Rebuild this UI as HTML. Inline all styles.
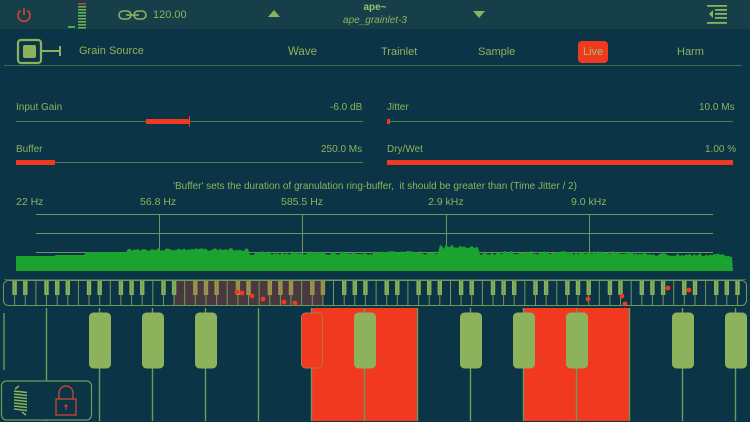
<!DOCTYPE html>
<html><head><meta charset="utf-8"><style>
*{margin:0;padding:0;box-sizing:border-box}
body{width:750px;height:422px;overflow:hidden;background:#0b3446;font-family:"Liberation Sans",sans-serif;color:#8cb35c;position:relative}
.a{position:absolute;white-space:nowrap}
.top{position:absolute;left:0;top:0;width:750px;height:29px;background:#163f49}
.lab{font-size:10px}
.tab{font-size:11px}
.ln{position:absolute;height:1px;background:#4f7a55}
.red{position:absolute;background:#f0391e}
</style></head><body>
<div class="top"></div>
<svg class="a" style="left:15px;top:6px" width="18" height="18" viewBox="0 0 18 18"><path d="M5.5 4.5A6 6 0 1 0 12.5 4.5" fill="none" stroke="#d9442c" stroke-width="1.6"/><line x1="9" y1="2" x2="9" y2="9" stroke="#d9442c" stroke-width="1.6"/></svg>
<svg class="a" style="left:66px;top:1px" width="22" height="28"><rect x="2" y="25" width="7" height="2" fill="#3fb53a"/><g fill="#6ab04a"><rect x="12" y="2" width="8" height="1.6" fill="#b84a3a"/><rect x="12" y="5" width="8" height="1.6"/><rect x="12" y="8" width="8" height="1.6"/><rect x="12" y="11" width="8" height="1.6"/><rect x="12" y="14" width="8" height="1.6"/><rect x="12" y="17" width="8" height="1.6"/><rect x="12" y="20" width="8" height="1.6"/><rect x="12" y="23" width="8" height="1.6"/><rect x="12" y="26" width="8" height="1.6"/></g></svg>
<svg class="a" style="left:118px;top:9px" width="30" height="12"><rect x="1" y="2" width="12" height="8" rx="4" fill="none" stroke="#8cb35c" stroke-width="1.6"/><rect x="16" y="2" width="12" height="8" rx="4" fill="none" stroke="#8cb35c" stroke-width="1.6"/><line x1="8" y1="6" x2="21" y2="6" stroke="#8cb35c" stroke-width="1.6"/></svg>
<div class="a" style="left:153px;top:9px;font-size:11px">120.00</div>
<svg class="a" style="left:268px;top:10px" width="12" height="8"><path d="M0 7L6 0L12 7Z" fill="#8cb35c"/></svg>
<svg class="a" style="left:473px;top:11px" width="12" height="8"><path d="M0 0L6 7L12 0Z" fill="#8cb35c"/></svg>
<div class="a" style="left:300px;top:2px;width:150px;text-align:center;font-size:10px;font-weight:bold;color:#9cc46a">ape~</div>
<div class="a" style="left:300px;top:15px;width:150px;text-align:center;font-size:10px;font-style:italic">ape_grainlet-3</div>
<svg class="a" style="left:707px;top:5px" width="22" height="21" fill="#8cb35c"><rect x="0" y="0" width="20" height="1.8"/><rect x="8" y="4" width="12" height="1.8"/><rect x="8" y="8" width="12" height="1.8"/><rect x="8" y="12" width="12" height="1.8"/><rect x="0" y="17" width="20" height="1.8"/><path d="M6 5L2 9L6 13Z"/></svg>
<svg class="a" style="left:16px;top:38px" width="50" height="28"><rect x="2" y="2" width="23" height="23" rx="3" fill="none" stroke="#8cb35c" stroke-width="2.2"/><rect x="7" y="7" width="13" height="13" rx="2" fill="#8cb35c"/><line x1="26" y1="13" x2="44" y2="13" stroke="#8cb35c" stroke-width="2"/><line x1="44" y1="8" x2="44" y2="18" stroke="#8cb35c" stroke-width="2"/></svg>
<div class="a tab" style="left:79px;top:45px">Grain Source</div>
<div class="a tab" style="left:288px;top:46px;font-size:11.5px">Wave</div>
<div class="a tab" style="left:381px;top:46px">Trainlet</div>
<div class="a tab" style="left:478px;top:46px">Sample</div>
<div class="a" style="left:578px;top:41px;width:30px;height:22px;background:#f0391e;border-radius:4px"></div>
<div class="a tab" style="left:583px;top:46px;color:#9cc46a">Live</div>
<div class="a tab" style="left:677px;top:46px">Harm</div>
<div class="ln" style="left:4px;top:65px;width:738px;background:#3f6a55"></div>
<div class="a lab" style="left:16px;top:102px">Input Gain</div>
<div class="a lab" style="left:330px;top:102px">-6.0 dB</div>
<div class="ln" style="left:16px;top:121px;width:347px"></div>
<div class="red" style="left:146px;top:119px;width:43px;height:5px"></div>
<div class="red" style="left:189px;top:116px;width:1px;height:11px"></div>
<div class="a lab" style="left:16px;top:144px">Buffer</div>
<div class="a lab" style="left:321px;top:144px">250.0 Ms</div>
<div class="ln" style="left:16px;top:162px;width:347px"></div>
<div class="red" style="left:16px;top:160px;width:39px;height:5px"></div>
<div class="a lab" style="left:387px;top:102px">Jitter</div>
<div class="a lab" style="left:699px;top:102px">10.0 Ms</div>
<div class="ln" style="left:387px;top:121px;width:346px"></div>
<div class="red" style="left:387px;top:119px;width:3px;height:5px"></div>
<div class="a lab" style="left:387px;top:144px">Dry/Wet</div>
<div class="a lab" style="left:705px;top:144px">1.00 %</div>
<div class="red" style="left:387px;top:160px;width:346px;height:5px"></div>
<div class="a" style="left:0;top:181px;width:750px;text-align:center;font-size:10px">'Buffer' sets the duration of granulation ring-buffer,&nbsp; it should be greater than (Time Jitter / 2)</div>
<div class="a" style="left:16px;top:196px;font-size:10.5px">22 Hz</div>
<div class="a" style="left:140px;top:196px;font-size:10.5px">56.8 Hz</div>
<div class="a" style="left:281px;top:196px;font-size:10.5px">585.5 Hz</div>
<div class="a" style="left:428px;top:196px;font-size:10.5px">2.9 kHz</div>
<div class="a" style="left:571px;top:196px;font-size:10.5px">9.0 kHz</div>
<svg class="a" style="left:0;top:210px" width="750" height="72" id="spec"></svg>
<svg class="a" style="left:0;top:278px" width="750" height="144" id="kb"></svg>
<script>
(function(){
var s=document.getElementById('spec'),h='';
h+='<g stroke="#6f9660" stroke-width="1"><line x1="36" y1="4.5" x2="713" y2="4.5"/><line x1="36" y1="23.5" x2="713" y2="23.5"/><line x1="36" y1="42.5" x2="713" y2="42.5"/>';
[159,302,446,589].forEach(function(x){h+='<line x1="'+(x+.5)+'" y1="4" x2="'+(x+.5)+'" y2="44"/>'});
h+='</g>';
var pts='16,61 ';var seed=3;function r(){seed=(seed*9301+49297)%233280;return seed/233280;}
for(var x=16;x<=733;x+=2){var y;
if(x<56)y=46;else if(x<86)y=45;else if(x<128)y=42;else if(x<250)y=38+r()*3;else if(x<440)y=41+r()*4;else if(x<480)y=34+r()*5;else if(x<650)y=41+r()*4;else y=43+r()*4;
pts+=x+','+y.toFixed(1)+' ';}
pts+='733,61';
h+='<polygon points="'+pts+'" fill="#1aa32e"/>';
h+='<line x1="4" y1="69.5" x2="746" y2="69.5" stroke="#3f6a55"/>';
s.innerHTML=h;
var k=document.getElementById('kb'),g='';
var G='#8cb35c',L='#6f9a58';
g+='<rect x="173" y="3" width="150" height="24" fill="#4a3840"/>';
g+='<rect x="3.5" y="2.5" width="743" height="25" rx="5" fill="none" stroke="'+L+'"/>';
var w=10.63;for(var i=0;i<70;i++){var x=4+i*w;if(i>0)g+='<line x1="'+x.toFixed(1)+'" y1="3" x2="'+x.toFixed(1)+'" y2="27" stroke="'+L+'"/>';
var n=i%7;if(n!=2&&n!=6&&i<69){var bx=x+w-2.2;var inh=bx>173&&bx<323;g+='<rect x="'+bx.toFixed(1)+'" y="3" width="4.4" height="14" fill="'+(inh?'#a89048':G)+'"/>';}}
[[237,17],[242,18],[252,21],[263,24],[284,27],[295,28],[588,24],[625,29],[622,21],[668,13],[689,15]].forEach(function(p){g+='<circle cx="'+p[0]+'" cy="'+(p[1]-3)+'" r="2.4" fill="#f0391e"/>'});
var T=30,B=143;
g+='<rect x="312" y="'+T+'" width="106" height="'+(B-T)+'" fill="#f0391e"/><rect x="524" y="'+T+'" width="106" height="'+(B-T)+'" fill="#f0391e"/>';
for(var j=0;j<14;j++){var x=46+j*53;g+='<line x1="'+(x+.5)+'" y1="'+T+'" x2="'+(x+.5)+'" y2="'+B+'" stroke="'+L+'" stroke-width="1.4"/>';}
g+='<line x1="4" y1="'+(T+5)+'" x2="4" y2="'+(T+62)+'" stroke="'+L+'" stroke-width="1.4"/>';
[100,153,206,312,365,471,524,577,683,736].forEach(function(c){var red=c==312;g+='<rect x="'+(c-10.5)+'" y="35" width="21" height="55" rx="4" fill="'+(red?'#f0391e':G)+'" stroke="'+(red?'#b07a40':G)+'"/>';});
g+='<rect x="1.5" y="103" width="90" height="39" rx="5" fill="#0b3446" stroke="'+L+'" stroke-width="1.2"/>';
var sp='';for(var q=0;q<7;q++){var yy=113+q*3;sp+='M14 '+yy+' L27 '+(yy+1.5)+' ';}
g+='<path d="'+sp+'M15 111 L19 108 M22 134 L26 137" stroke="'+G+'" stroke-width="1.5" fill="none"/>';
g+='<rect x="56" y="121" width="20" height="16" fill="none" stroke="#c0443a" stroke-width="1.4"/><path d="M59 121 V115 A7 7 0 0 1 73 115 V121" fill="none" stroke="#c0443a" stroke-width="1.4"/><circle cx="66" cy="128" r="1.5" fill="#c0443a"/><line x1="66" y1="128" x2="66" y2="132" stroke="#c0443a"/>';
k.innerHTML=g;
})();
</script>
</body></html>
